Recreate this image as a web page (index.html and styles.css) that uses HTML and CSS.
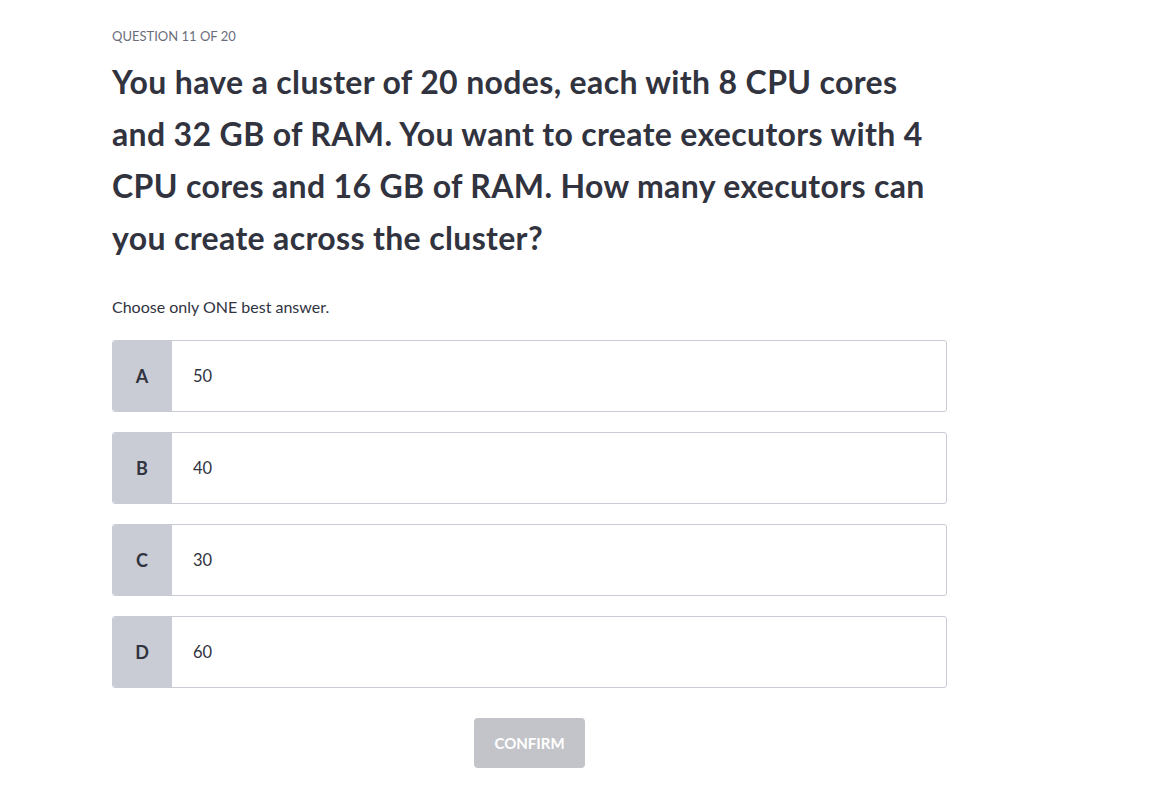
FILE: index.html
```html
<!DOCTYPE html>
<html lang="en">
<head>
<meta charset="utf-8">
<title>Question 11 of 20</title>
<link rel="stylesheet" href="styles.css">
</head>
<body>
<main class="quiz">
  <div class="counter">Question 11 of 20</div>
  <h1 class="question">You have a cluster of 20 nodes, each with 8 CPU cores and 32 GB of RAM. You want to create executors with 4 CPU cores and 16 GB of RAM. How many executors can you create across the cluster?</h1>
  <p class="hint">Choose only ONE best answer.</p>
  <ul class="options">
    <li class="option"><span class="letter">A</span><span class="answer">50</span></li>
    <li class="option"><span class="letter">B</span><span class="answer">40</span></li>
    <li class="option"><span class="letter">C</span><span class="answer">30</span></li>
    <li class="option"><span class="letter">D</span><span class="answer">60</span></li>
  </ul>
  <div class="actions"><button class="confirm" disabled>Confirm</button></div>
</main>
</body>
</html>
```
FILE: styles.css
```css
* { box-sizing: border-box; }
html, body { margin: 0; padding: 0; background: #ffffff; }
body { font-family: "Lato", "Noto Sans", sans-serif; color: #31333f; }
.quiz { width: 835px; margin-left: 112px; padding-top: 26px; }
.counter { font-size: 13px; line-height: 20px; text-transform: uppercase; color: #6b6e7a; }
.question { margin: 10px 0 0; font-size: 32px; line-height: 52px; font-weight: 700; letter-spacing: 0.35px; color: #31333f; max-width: 830px; }
.hint { margin: 32px 0 0; font-size: 16px; line-height: 22px; color: #31333f; }
.options { list-style: none; margin: 22px 0 0; padding: 0; display: flex; flex-direction: column; gap: 20px; }
.option { display: flex; height: 72px; border: 1px solid #c9ccd5; border-radius: 3px; overflow: hidden; background: #fff; }
.letter { width: 60px; flex: none; background: #c9ccd5; display: flex; align-items: center; justify-content: center; font-size: 18px; font-weight: 700; color: #31333f; margin: -1px 0 -1px -1px; }
.answer { display: flex; align-items: center; padding-left: 21px; font-size: 16.5px; color: #31333f; }
.actions { display: flex; justify-content: center; margin-top: 30px; }
.confirm { width: 111px; height: 50px; border: none; border-radius: 4px; background: #c3c4c9; color: #ffffff; font-family: inherit; font-size: 15px; font-weight: 700; text-transform: uppercase; }
```
